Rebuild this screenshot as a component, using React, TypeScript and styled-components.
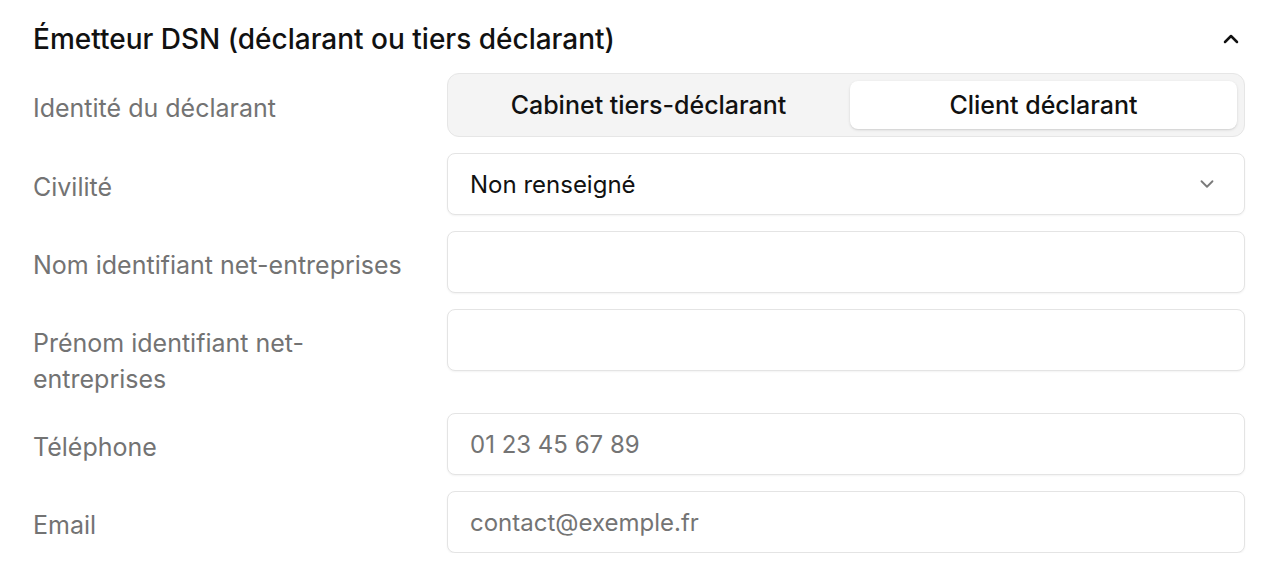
import { Fragment } from 'react'
import styled, { createGlobalStyle } from 'styled-components'
import { ChevronDown, ChevronUp } from 'lucide-react'

const GlobalStyle = createGlobalStyle`
  html, body {
    margin: 0;
    padding: 0;
    background: #ffffff;
  }
  body {
    font-family: Inter, 'Noto Sans', sans-serif;
    color: #111111;
    -webkit-font-smoothing: antialiased;
  }
`

const Section = styled.section`
  padding: 11px 35px 0 33px;
`

const Header = styled.div`
  display: flex;
  align-items: center;
  justify-content: space-between;
  height: 56px;
  margin-bottom: 6px;
`

const Title = styled.h2`
  margin: 0;
  font-size: 28px;
  font-weight: 500;
  color: #111111;
`

const CollapseButton = styled.button`
  display: flex;
  align-items: center;
  justify-content: center;
  padding: 0;
  margin-right: 2px;
  border: 0;
  background: none;
  color: #111111;
  cursor: pointer;
`

const Form = styled.div`
  display: grid;
  grid-template-columns: 382px 1fr;
  column-gap: 32px;
  row-gap: 16px;
`

const Label = styled.label<{ $top?: number }>`
  padding-top: ${(p) => p.$top ?? 16}px;
  font-size: 25px;
  line-height: 36px;
  color: #737373;
`

const Segmented = styled.div`
  display: grid;
  grid-template-columns: 1fr 1fr;
  gap: 8px;
  height: 64px;
  box-sizing: border-box;
  padding: 7px;
  background: #f4f4f4;
  border: 1px solid #e6e6e6;
  border-radius: 12px;
`

const Tab = styled.button<{ $active?: boolean }>`
  border: 0;
  border-radius: 8px;
  font-family: inherit;
  font-size: 25px;
  font-weight: 500;
  color: #111111;
  background: ${(p) => (p.$active ? '#ffffff' : 'transparent')};
  box-shadow: ${(p) =>
    p.$active ? '0 1px 3px rgba(0, 0, 0, 0.12), 0 1px 1px rgba(0, 0, 0, 0.04)' : 'none'};
  cursor: pointer;
`

const Field = styled.div`
  display: flex;
  align-items: center;
  justify-content: space-between;
  height: 62px;
  box-sizing: border-box;
  padding: 0 26px 0 22px;
  background: #ffffff;
  border: 1px solid #e4e4e4;
  border-radius: 8px;
  box-shadow: 0 1px 2px rgba(0, 0, 0, 0.05);
`

const FieldText = styled.span<{ $placeholder?: boolean }>`
  font-size: 24px;
  color: ${(p) => (p.$placeholder ? '#747474' : '#111111')};
`

const SelectIcon = styled.span`
  display: flex;
  color: #7a7a7a;
`

const fields = [
  { label: 'Nom identifiant net-entreprises', placeholder: '' },
  { label: 'Prénom identifiant net-entreprises', placeholder: '' },
  { label: 'Téléphone', placeholder: '01 23 45 67 89' },
  { label: 'Email', placeholder: 'contact@exemple.fr' },
]

export default function App() {
  return (
    <>
      <GlobalStyle />
      <Section>
        <Header>
          <Title>Émetteur DSN (déclarant ou tiers déclarant)</Title>
          <CollapseButton aria-label="Replier">
            <ChevronUp size={24} strokeWidth={2.5} />
          </CollapseButton>
        </Header>
        <Form>
          <Label $top={17}>Identité du déclarant</Label>
          <Segmented>
            <Tab>Cabinet tiers-déclarant</Tab>
            <Tab $active>Client déclarant</Tab>
          </Segmented>

          <Label>Civilité</Label>
          <Field>
            <FieldText>Non renseigné</FieldText>
            <SelectIcon>
              <ChevronDown size={22} strokeWidth={2} />
            </SelectIcon>
          </Field>

          {fields.map((f) => (
            <Fragment key={f.label}>
              <Label>{f.label}</Label>
              <Field>
                <FieldText $placeholder>{f.placeholder}</FieldText>
              </Field>
            </Fragment>
          ))}
        </Form>
      </Section>
    </>
  )
}
